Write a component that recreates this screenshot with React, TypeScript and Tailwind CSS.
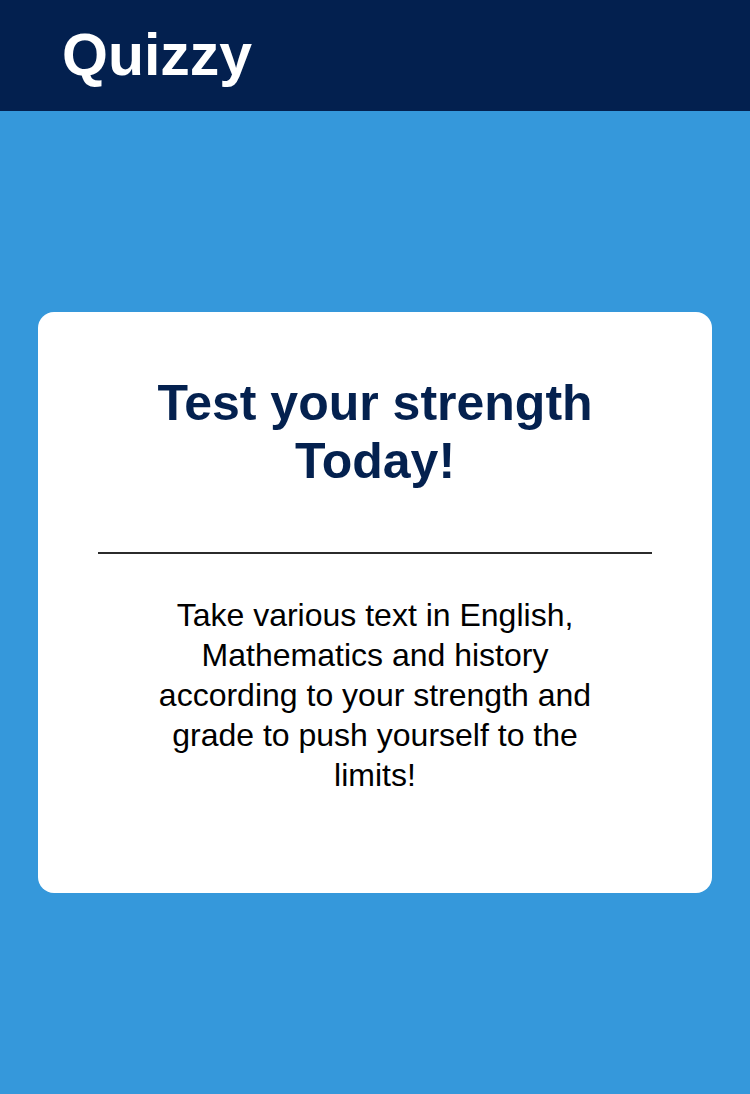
const App = () => {
  return (
    <div
      className="min-h-screen bg-[#3598db] flex flex-col"
      style={{ fontFamily: '"Liberation Sans", Arial, sans-serif' }}
    >
      {/* Header */}
      <header className="h-[111px] bg-[#03204f] flex items-center px-[62px]">
        <h1 className="text-white font-bold text-[59px] leading-none">Quizzy</h1>
      </header>

      {/* Card */}
      <main className="px-[38px] pt-[201px]">
        <div className="bg-white rounded-[16px] h-[581px] px-[60px] pt-[62px] flex flex-col items-center">
          <h2 className="text-[#04214f] font-bold text-[50px] leading-[58px] text-center">
            Test your strength
            <br />
            Today!
          </h2>

          <hr className="w-full border-0 h-[2px] bg-[#2b2b2b] mt-[62px]" />

          <p className="mt-[41px] max-w-[460px] text-center text-black text-[32px] leading-[40px]">
            Take various text in English, Mathematics and history according to
            your strength and grade to push yourself to the limits!
          </p>
        </div>
      </main>
    </div>
  );
};

export default App;
